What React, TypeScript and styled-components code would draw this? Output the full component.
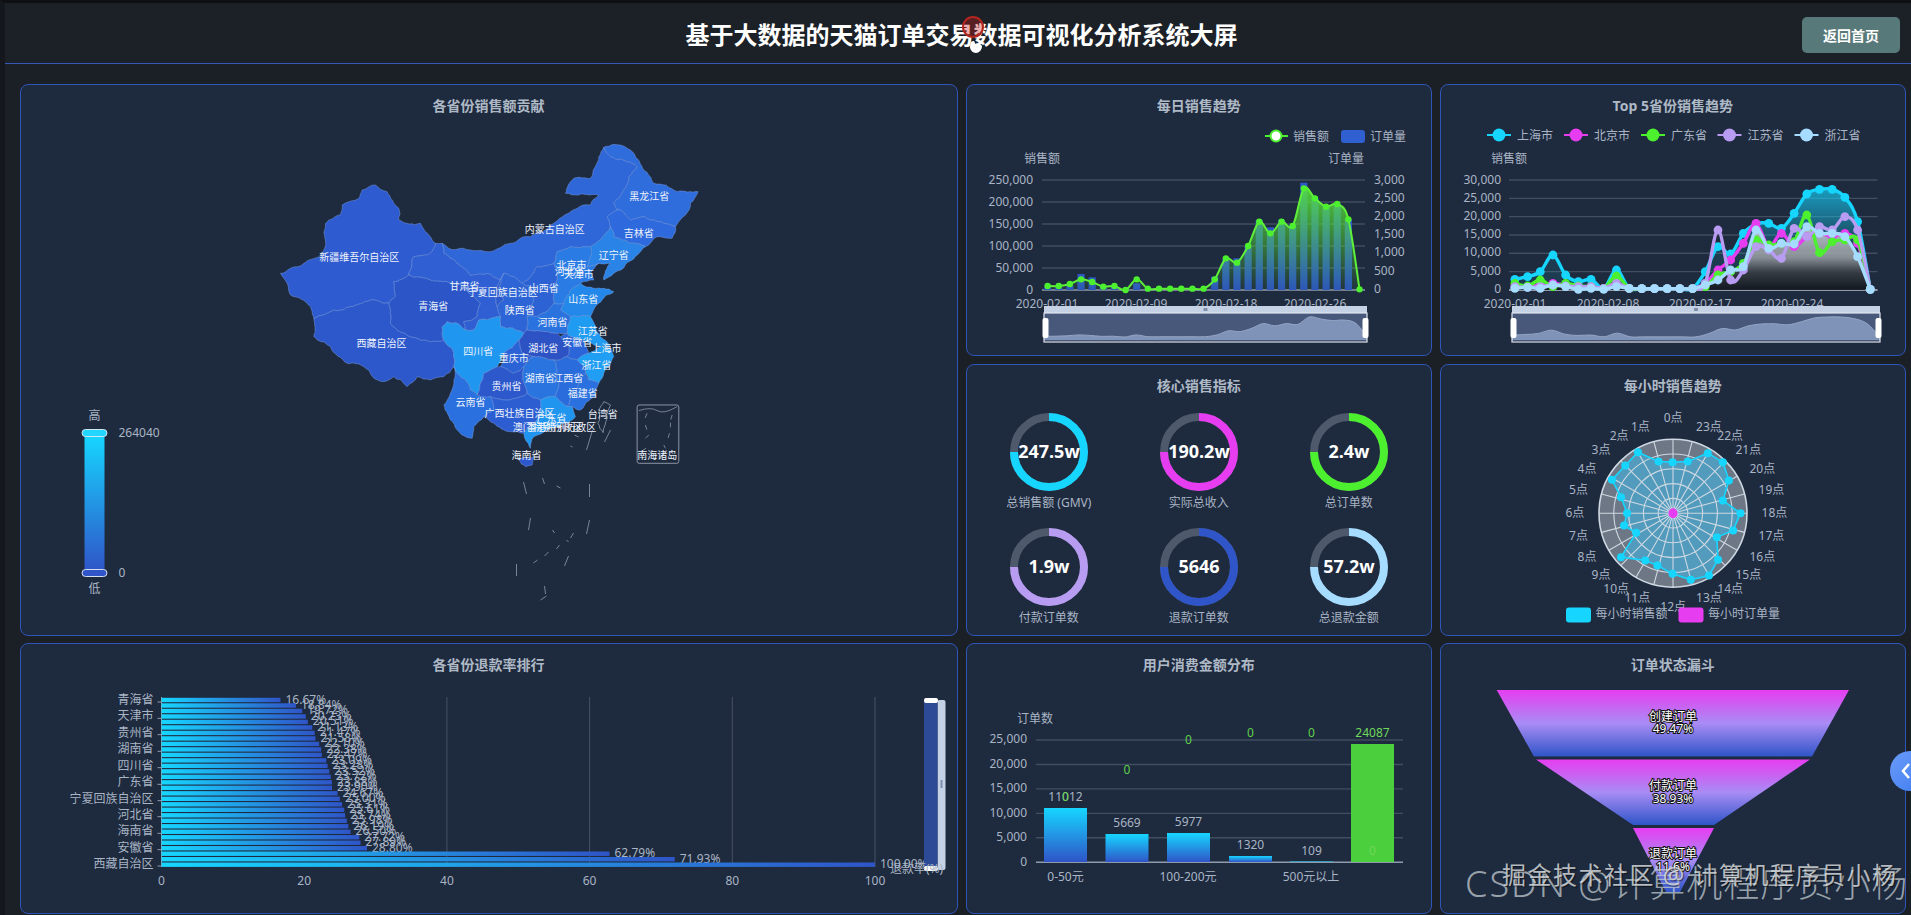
import React from 'react';
import styled, { createGlobalStyle } from 'styled-components';

const GlobalStyle = createGlobalStyle`
  html, body { margin: 0; padding: 0; background: #14181d; }
  body { font-family: "Noto Sans", "Noto Sans CJK SC", sans-serif; overflow: hidden; }
`;

const Page = styled.div`
  position: relative;
  width: 1911px;
  height: 915px;
  overflow: hidden;
  box-sizing: border-box;
  border-left: 5px solid #14171b;
  border-top: 3px solid #0d0f12;
  background: #1b2026;
`;
const Header = styled.header`
  display: grid;
  grid-template-columns: 1fr auto 1fr;
  align-items: center;
  box-sizing: border-box;
  height: 61px;
  padding: 3px 11px 0 18px;
  background: #1c2127;
  border-bottom: 1px solid #3757b8;
`;
const PageTitle = styled.h1`
  grid-column: 2;
  margin: 0;
  color: #fff;
  font-size: 24px;
  line-height: 32px;
  font-weight: 700;
  white-space: nowrap;
`;
const BackButton = styled.button`
  grid-column: 3;
  justify-self: end;
  width: 98px;
  height: 36px;
  border: 0;
  border-radius: 5px;
  background: #587979;
  color: #fff;
  font: 700 14px "Noto Sans", "Noto Sans CJK SC", sans-serif;
`;
const Board = styled.main`
  display: grid;
  grid-template-columns: 938px 465.5px 465.5px;
  grid-template-rows: 272px 272px 271px;
  column-gap: 8.5px;
  row-gap: 7.5px;
  padding: 20px 0 0 14.5px;
`;
const Card = styled.section<{ $tall?: boolean }>`
  display: flex;
  flex-direction: column;
  box-sizing: border-box;
  min-height: 0;
  border: 1px solid #2f55b8;
  border-radius: 8px;
  background: #1e2a3e;
  overflow: hidden;
  grid-row: ${p => (p.$tall ? 'span 2' : 'auto')};
`;
const CardTitle = styled.h2`
  flex: none;
  box-sizing: border-box;
  height: 32px;
  margin: 0;
  padding-top: 11px;
  color: #aeb9c6;
  font-size: 14px;
  line-height: 20px;
  font-weight: 700;
  text-align: center;
`;
const Chart = styled.svg`
  display: block;
  flex: 1;
  width: 100%;
  min-height: 0;
`;
const Label = styled.text<{ $size?: number; $color?: string; $weight?: number; $anchor?: string }>`
  font-family: "Noto Sans", "Noto Sans CJK SC", sans-serif;
  font-size: ${p => p.$size ?? 12}px;
  font-weight: ${p => p.$weight ?? 400};
  fill: ${p => p.$color ?? '#a9b5c5'};
  text-anchor: ${p => p.$anchor ?? 'middle'};
  dominant-baseline: central;
`;
const FunnelLabel = styled(Label)`
  fill: #fff;
  stroke: #111;
  stroke-width: 2px;
  paint-order: stroke;
`;
const MetricGrid = styled.div`
  display: grid;
  grid-template-columns: repeat(3, 150px);
  justify-content: center;
  row-gap: 16px;
  padding-top: 16px;
`;
const Metric = styled.div`
  display: flex;
  flex-direction: column;
  align-items: center;
  gap: 3px;
`;
const MetricRing = styled.svg`
  display: block;
  width: 78px;
  height: 78px;
`;
const MetricName = styled.span`
  color: #a9b5c5;
  font-size: 12px;
  line-height: 18px;
  white-space: nowrap;
`;
const WatermarkBack = styled.div`
  position: absolute;
  left: 1460px;
  top: 859px;
  color: rgba(200, 210, 214, 0.72);
  font-size: 36px;
  line-height: 44px;
  font-weight: 300;
  letter-spacing: 1px;
  white-space: nowrap;
`;
const WatermarkLatin = styled.span`
  letter-spacing: 2px;
`;
const WatermarkFront = styled.div`
  position: absolute;
  left: 1497px;
  top: 855px;
  color: rgba(226, 230, 232, 0.78);
  font-size: 24px;
  line-height: 34px;
  letter-spacing: 1.5px;
  text-shadow: 1px 1px 1px rgba(0, 0, 0, 0.55);
  white-space: nowrap;
`;
const SideToggle = styled.div`
  position: absolute;
  right: -19px;
  top: 748px;
  display: flex;
  align-items: center;
  box-sizing: border-box;
  width: 40px;
  height: 40px;
  padding-left: 11px;
  border-radius: 50%;
  background: linear-gradient(135deg, #6a9cf8, #3f7bf0);
`;
const Seal = styled.svg`
  position: absolute;
  left: 955px;
  top: 10px;
  width: 36px;
  height: 44px;
`;

const CYAN = '#16d6ff', MAG = '#e63df0', GRN = '#4cf02e', VIO = '#b79cf2', NAVY = '#2f55c8', SKY = '#a5dcff';

type Pt = [number, number];
const smooth = (p: Pt[]) => {
  let d = `M${p[0][0]} ${p[0][1]}`;
  for (let i = 0; i < p.length - 1; i++) {
    const a = p[Math.max(i - 1, 0)], b = p[i], c = p[i + 1], e = p[Math.min(i + 2, p.length - 1)];
    d += `C${b[0] + (c[0] - a[0]) / 6} ${b[1] + (c[1] - a[1]) / 6} ${c[0] - (e[0] - b[0]) / 6} ${c[1] - (e[1] - b[1]) / 6} ${c[0]} ${c[1]}`;
  }
  return d;
};
const box = (x: number, y: number, w: number, h: number) => `${x + 1} ${y + 33} ${w - 2} ${h - 34}`;

const px = (X: number) => 960 + X / 1.649;
const y2 = (Y: number) => 70 + Y / 3;
const y3 = (Y: number) => 360 + Y / 3;
const y5 = (Y: number) => 640 + Y / 3;

/* Breaks a coarse border into an organic one; shared edges break the same way. */
const noise = (a: Pt, b: Pt) => {
  const s = Math.sin(a[0] * 12.9898 + a[1] * 78.233 + b[0] * 37.719 + b[1] * 11.135) * 43758.5453;
  return s - Math.floor(s) - 0.5;
};
const split = (a: Pt, b: Pt, depth: number): Pt[] => {
  const swap = a[0] > b[0] || (a[0] === b[0] && a[1] > b[1]);
  const [p, q] = swap ? [b, a] : [a, b];
  const dx = q[0] - p[0], dy = q[1] - p[1];
  if (depth === 0 || Math.hypot(dx, dy) < 12) return [a];
  const n = noise(p, q) * 0.22;
  const m: Pt = [(p[0] + q[0]) / 2 - dy * n, (p[1] + q[1]) / 2 + dx * n];
  return [...split(a, m, depth - 1), ...split(m, b, depth - 1)];
};
const roughen = (s: string) => {
  const pts = s.split(' ').map(t => t.split(',').map(Number) as Pt);
  return pts.flatMap((a, i) => split(a, pts[(i + 1) % pts.length], 3)).map(p => `${p[0].toFixed(1)},${p[1].toFixed(1)}`).join(' ');
};

/* ---------- map ---------- */
const provinces: { c: string; p: string }[] = [
  { c: '#2e5bd0', p: '30,400 60,385 100,370 150,350 165,300 165,250 210,225 215,195 265,175 275,150 315,135 350,155 385,205 385,240 450,250 480,290 495,310 480,340 430,350 415,405 370,425 375,470 355,490 300,480 240,500 190,510 130,535 110,490 60,465 50,430' },
  { c: '#2d58cc', p: '130,535 190,510 240,500 300,480 355,490 360,550 420,590 480,605 520,600 545,625 550,680 520,710 480,720 440,710 410,740 370,710 340,725 280,680 230,670 180,620 140,600 130,590' },
  { c: '#2c56c8', p: '370,425 415,405 480,420 530,425 580,440 610,470 630,490 620,530 580,545 585,570 560,550 530,545 515,560 520,600 480,605 420,590 360,550 355,490 375,470' },
  { c: '#2f5fd3', p: '495,310 515,310 520,340 560,370 600,405 650,400 690,420 670,450 680,500 690,530 650,540 625,540 610,570 585,570 580,545 620,530 630,490 610,470 580,440 530,425 480,420 415,405 430,350 480,340' },
  { c: '#2f66d8', p: '515,310 600,330 660,335 720,310 780,290 850,250 900,215 960,195 985,165 955,165 905,165 885,160 910,115 960,115 985,50 1000,22 1020,50 1085,70 1100,80 1075,110 1060,150 1030,190 1040,210 1010,230 1020,260 990,300 960,320 940,320 900,320 860,335 850,370 800,380 755,430 700,400 690,420 650,400 600,405 560,370 520,340' },
  { c: '#2f6cdc', p: '1000,22 1030,13 1050,15 1090,40 1120,90 1150,130 1220,155 1283,155 1260,190 1245,225 1215,260 1170,245 1120,230 1080,240 1050,210 1040,210 1030,190 1060,150 1075,110 1100,80 1085,70 1020,50' },
  { c: '#2e6ade', p: '1040,210 1050,210 1080,240 1120,230 1170,245 1215,260 1205,295 1160,290 1125,320 1080,310 1030,290 1020,260 1010,230' },
  { c: '#2a83e6', p: '960,320 990,300 1020,260 1030,290 1080,310 1125,320 1075,365 1030,400 1000,420 1020,370 985,370 950,380 960,350' },
  { c: '#2a7be4', p: '860,335 900,320 940,320 960,320 960,350 950,380 985,370 960,400 970,420 930,430 900,450 880,490 850,490 850,440 860,400 850,370' },
  { c: '#2d62d4', p: '800,380 850,370 860,400 850,440 850,490 800,530 770,530 790,480 780,440 755,430' },
  { c: '#2388ea', p: '880,490 900,450 930,430 970,445 1000,445 1030,455 985,490 960,530 900,530 870,510' },
  { c: '#2d64d6', p: '700,400 755,430 780,440 790,480 770,530 770,570 760,580 690,560 690,530 680,500 700,480 680,450' },
  { c: '#2d5acc', p: '690,420 700,400 680,450 700,480 680,500 670,450' },
  { c: '#2a72de', p: '770,530 800,530 850,490 880,490 870,510 900,530 890,580 860,580 820,575 770,570' },
  { c: '#1f9bf2', p: '900,530 960,530 990,590 1020,620 990,620 940,600 900,590 890,580' },
  { c: '#2b65d8', p: '890,580 900,590 940,600 955,640 920,660 890,650 895,610 870,590' },
  { c: '#1f9ef4', p: '955,640 990,620 1020,625 1030,650 1000,700 985,730 955,720 945,680 920,660' },
  { c: '#2d52c4', p: '760,580 770,570 820,575 860,580 870,590 895,610 890,650 850,660 790,650 755,640 745,600' },
  { c: '#1f97f0', p: '520,600 515,560 530,545 560,550 585,570 610,570 625,540 650,540 690,530 690,560 760,580 745,600 700,640 680,680 640,700 620,765 600,750 585,720 550,680 545,625' },
  { c: '#2b62d6', p: '745,600 755,640 790,650 760,680 730,700 690,680 700,640' },
  { c: '#2d58cc', p: '640,700 680,680 690,680 730,700 760,680 765,740 770,760 700,780 660,770 620,765' },
  { c: '#2a70de', p: '550,680 585,720 600,750 620,765 660,770 670,810 640,830 610,860 605,895 560,870 540,840 520,795 540,760' },
  { c: '#2a74e0', p: '790,650 850,660 860,690 855,770 810,780 770,760 765,740 760,680' },
  { c: '#2a6cdc', p: '850,660 890,650 920,660 945,680 945,700 900,770 890,800 855,770 860,690' },
  { c: '#2a70de', p: '945,700 955,720 985,730 975,770 930,810 905,800 890,800 900,770' },
  { c: '#2c5ed2', p: '660,770 700,780 770,760 810,780 810,810 790,850 760,880 720,875 670,850 640,830 670,810' },
  { c: '#1f95f0', p: '810,780 855,770 890,800 905,800 915,830 880,850 830,870 790,890 780,925 765,900 760,880 790,850 810,810' },
  { c: '#2d58cc', p: '745,960 765,950 790,950 785,975 765,980' },
];
const mapNames: [string, number, number][] = [
  ['新疆维吾尔自治区', 266, 350], ['西藏自治区', 333, 610], ['青海省', 488, 497], ['甘肃省', 582, 438],
  ['宁夏回族自治区', 697, 455], ['内蒙古自治区', 853, 268], ['黑龙江省', 1136, 167], ['吉林省', 1105, 280],
  ['辽宁省', 1030, 344], ['北京市', 903, 376], ['河北省', 898, 392], ['天津市', 925, 402], ['山西省', 820, 445],
  ['山东省', 938, 478], ['陕西省', 748, 510], ['河南省', 846, 545], ['江苏省', 967, 572], ['安徽省', 920, 605],
  ['上海市', 1008, 623], ['湖北省', 818, 624], ['四川省', 623, 633], ['重庆市', 730, 653], ['浙江省', 978, 676],
  ['湖南省', 808, 715], ['江西省', 893, 715], ['贵州省', 708, 738], ['福建省', 937, 760], ['云南省', 600, 787],
  ['广西壮族自治区', 747, 820], ['广东省', 843, 835], ['台湾省', 997, 822], ['澳门特别行政区', 832, 862],
  ['香港特别行政区', 872, 862], ['海南省', 768, 945], ['南海诸岛', 1160, 945],
];
const dashes: [number, number, number, number][] = [
  [523, 482, 526, 494], [589, 484, 589, 497], [530, 518, 528, 530], [589, 520, 586, 534], [516, 564, 516, 576],
  [568, 556, 564, 566], [544, 586, 545, 594], [546, 596, 540, 600], [592, 430, 586, 450], [610, 430, 604, 442],
  [542, 478, 544, 484], [556, 486, 560, 488], [573, 533, 570, 538], [559, 545, 556, 549], [548, 552, 544, 556],
  [537, 560, 533, 563], [552, 530, 554, 533], [566, 540, 568, 542], [574, 435, 578, 437], [570, 446, 572, 447],
];

const ChinaMap = () => (
  <Chart viewBox={box(19.5, 84, 938, 551.5)}>
    <defs>
      <linearGradient id="vm" x1="0" y1="0" x2="0" y2="1">
        <stop offset="0" stopColor={CYAN} />
        <stop offset="1" stopColor={NAVY} />
      </linearGradient>
    </defs>
    <g transform="translate(270 140) scale(0.3333)">
      {provinces.map((v, i) => (
        <polygon key={i} points={roughen(v.p)} fill={v.c} stroke="#7fa3e6" strokeOpacity={0.6} strokeWidth={2.2} strokeLinejoin="round" />
      ))}
      <polygon points={roughen('1000,785 1020,795 1010,835 998,878 982,850 985,810')} fill="#1e2a3e" stroke="#8794a6" strokeWidth={2.6} />
      <rect x={1100} y={795} width={125} height={175} rx={6} fill="none" stroke="#8c96a6" strokeWidth={3} />
      <path d="M1105 812Q1140 800 1160 812T1220 800" fill="none" stroke="#8c96a6" strokeWidth={2.4} />
      <path d="M1130 820l-6 14M1205 825l-4 14M1125 855l4 14M1200 848l0 14M1135 885l-10 10M1197 880l-4 14M1127 925l-10 6M1180 915l5 10" stroke="#8c96a6" strokeWidth={2.4} fill="none" />
    </g>
    {dashes.map((d, i) => (
      <line key={i} x1={d[0]} y1={d[1]} x2={d[2]} y2={d[3]} stroke="#77849a" strokeWidth={1} />
    ))}
    {mapNames.map(([n, X, Y]) => (
      <Label key={n} x={270 + X / 3} y={140 + Y / 3} $size={10} $color="#eef3fc">{n}</Label>
    ))}
    <Label x={94} y={415}>高</Label>
    <rect x={84} y={435} width={20} height={136} fill="url(#vm)" />
    <rect x={81.5} y={429.5} width={25} height={7} rx={3.5} fill="#22d6ff" stroke="#cfe6f5" strokeWidth={1} />
    <rect x={81.5} y={569.5} width={25} height={7} rx={3.5} fill="#2f55c8" stroke="#d5ddf0" strokeWidth={1} />
    <Label x={94} y={588}>低</Label>
    <Label x={118} y={432} $anchor="start">264040</Label>
    <Label x={118} y={572} $anchor="start">0</Label>
  </Chart>
);

/* ---------- shared data zoom ---------- */
const DataZoom = ({ x0, x1, ys, lo, hi }: { x0: number; x1: number; ys: number[]; lo: number; hi: number }) => {
  const pts: Pt[] = ys.map((Y, i) => [x0 + ((x1 - x0) * i) / (ys.length - 1), 337 - ((hi - Y) / (hi - lo)) * 20]);
  const d = smooth(pts);
  const mid = (x0 + x1) / 2;
  return (
    <g>
      <rect x={x0} y={306} width={x1 - x0} height={7} fill="#c5d2e5" />
      <rect x={x0} y={313} width={x1 - x0} height={28} fill="#48587a" />
      <path d={`${d}L${x1} 340L${x0} 340Z`} fill="#7f93b8" />
      <path d={d} fill="none" stroke="#93a6c6" strokeWidth={1} />
      <rect x={x0} y={313} width={x1 - x0} height={29} fill="none" stroke="#dfe6f0" strokeWidth={1.2} />
      <rect x={mid - 2} y={308} width={4} height={3} fill="#8090aa" />
      <rect x={x0 - 1.5} y={318} width={6} height={20} rx={2} fill="#fff" />
      <rect x={x1 - 4.5} y={318} width={6} height={20} rx={2} fill="#fff" />
    </g>
  );
};

/* ---------- daily ---------- */
const dailyLine = [648, 648, 642, 628, 636, 650, 648, 660, 628, 656, 656, 656, 656, 656, 656, 628, 565, 578, 528, 455, 490, 455, 468, 355, 385, 410, 402, 448, 658];
const dailyBars = [652, 652, 648, 612, 622, 650, 650, 656, 640, 658, 658, 658, 658, 658, 658, 620, 568, 565, 530, 450, 472, 450, 465, 338, 385, 410, 402, 448, 658];
const dailyX = (i: number) => 1047.6 + i * 11.14;

const DailyChart = () => {
  const line: Pt[] = dailyLine.map((Y, i) => [dailyX(i), y2(Y)]);
  const d = smooth(line);
  return (
    <Chart viewBox={box(966, 84, 465.5, 272)}>
      <defs>
        <linearGradient id="dBar" x1="0" y1="0" x2="0" y2="1">
          <stop offset="0" stopColor="#2f55c8" />
          <stop offset="1" stopColor="#2a4fc0" />
        </linearGradient>
        <linearGradient id="dArea" gradientUnits="userSpaceOnUse" x1="0" y1="190" x2="0" y2="290">
          <stop offset="0" stopColor="#56e63a" stopOpacity={0.85} />
          <stop offset="1" stopColor="#56e63a" stopOpacity={0.05} />
        </linearGradient>
      </defs>
      <line x1={1265} y1={136} x2={1288} y2={136} stroke={GRN} strokeWidth={2} />
      <circle cx={1276} cy={136} r={5.5} fill="#fff" stroke={GRN} strokeWidth={2} />
      <Label x={1293} y={136} $anchor="start">销售额</Label>
      <rect x={1341} y={130} width={24} height={13} rx={3} fill="#2f5fd0" />
      <Label x={1370} y={136} $anchor="start">订单量</Label>
      <Label x={1042} y={158}>销售额</Label>
      <Label x={1346} y={158}>订单量</Label>
      {['250,000', '200,000', '150,000', '100,000', '50,000', '0'].map((t, i) => (
        <g key={t}>
          <line x1={1042} x2={1365} y1={180 + i * 22} y2={180 + i * 22} stroke={i === 5 ? '#8f9bad' : '#414d60'} strokeWidth={1.4} />
          <Label x={1033} y={179 + i * 22} $anchor="end">{t}</Label>
        </g>
      ))}
      {['3,000', '2,500', '2,000', '1,500', '1,000', '500', '0'].map((t, i) => (
        <Label key={t} x={1374} y={179 + i * 18.2} $anchor="start">{t}</Label>
      ))}
      {dailyBars.map((Y, i) => (
        <rect key={i} x={dailyX(i) - 3.6} y={y2(Y)} width={7.2} height={Math.max(290 - y2(Y), 0)} fill="url(#dBar)" />
      ))}
      <path d={`${d}L${dailyX(28)} 290L${dailyX(0)} 290Z`} fill="url(#dArea)" />
      <path d={d} fill="none" stroke="#5ff03a" strokeWidth={2} />
      {line.map((p, i) => <circle key={i} cx={p[0]} cy={p[1]} r={3.2} fill={GRN} />)}
      {[['2020-02-01', 1047], ['2020-02-09', 1136], ['2020-02-18', 1226], ['2020-02-26', 1315]].map(([t, x]) => (
        <Label key={t as string} x={x as number} y={303}>{t}</Label>
      ))}
      <DataZoom x0={1044} x1={1367} ys={dailyLine} lo={355} hi={660} />
    </Chart>
  );
};

/* ---------- top 5 ---------- */
const flat = [656, 656, 656, 656, 656, 656];
const top5: { n: string; c: string; lx: number; v: number[] }[] = [
  { n: '上海市', c: CYAN, lx: 1499, v: [628, 620, 605, 555, 615, 635, 628, 655, 600, 655, ...flat.slice(0, 5), 605, 530, 552, 490, 462, 460, 475, 430, 372, 358, 358, 382, 455, 658] },
  { n: '北京市', c: MAG, lx: 1576, v: [650, 650, 645, 640, 645, 650, 650, 655, 640, 655, ...flat.slice(0, 5), 640, 600, 570, 520, 460, 530, 490, 530, 500, 490, 500, 490, 520, 658] },
  { n: '广东省', c: GRN, lx: 1653, v: [640, 648, 630, 650, 640, 648, 650, 655, 618, 655, ...flat.slice(0, 5), 650, 615, 605, 580, 510, 525, 520, 515, 435, 548, 515, 510, 510, 658] },
  { n: '江苏省', c: VIO, lx: 1729.5, v: [650, 652, 650, 645, 648, 650, 650, 655, 640, 655, ...flat.slice(0, 5), 640, 480, 630, 600, 530, 540, 565, 475, 500, 470, 480, 440, 480, 658] },
  { n: '浙江省', c: SKY, lx: 1806.5, v: [655, 652, 655, 645, 650, 658, 655, 658, 650, 655, ...flat.slice(0, 5), 645, 630, 600, 590, 480, 535, 520, 522, 470, 490, 490, 500, 560, 658] },
];
const topX = (i: number) => px(915 + i * 20.93);

const Top5Chart = () => {
  const paths = top5.map(s => {
    const pts: Pt[] = s.v.map((Y, i) => [topX(i), y2(Y)]);
    return { ...s, pts, d: smooth(pts) };
  });
  const closed = (d: string) => `${d}L${topX(28)} 290L${topX(0)} 290Z`;
  return (
    <Chart viewBox={box(1440, 84, 465.5, 272)}>
      <defs>
        <linearGradient id="tCyan" gradientUnits="userSpaceOnUse" x1="0" y1="185" x2="0" y2="250">
          <stop offset="0" stopColor={CYAN} stopOpacity={0.7} />
          <stop offset="1" stopColor={CYAN} stopOpacity={0.1} />
        </linearGradient>
        <linearGradient id="tWhite" gradientUnits="userSpaceOnUse" x1="0" y1="225" x2="0" y2="290">
          <stop offset="0" stopColor="#dfe3e5" stopOpacity={0.75} />
          <stop offset="0.5" stopColor="#9a9ca0" stopOpacity={0.85} />
          <stop offset="0.72" stopColor="#3a3d44" stopOpacity={0.9} />
          <stop offset="1" stopColor="#10131a" stopOpacity={0.9} />
        </linearGradient>
      </defs>
      {paths.map(s => (
        <g key={s.n}>
          <line x1={s.lx - 12} x2={s.lx + 12} y1={135} y2={135} stroke={s.c} strokeWidth={2} />
          <circle cx={s.lx} cy={135} r={6.5} fill={s.c} />
          <Label x={s.lx + 18} y={135} $anchor="start">{s.n}</Label>
        </g>
      ))}
      <Label x={1509} y={158}>销售额</Label>
      {['30,000', '25,000', '20,000', '15,000', '10,000', '5,000', '0'].map((t, i) => (
        <g key={t}>
          <line x1={1509} x2={1877.5} y1={180 + i * 18.33} y2={180 + i * 18.33} stroke={i === 6 ? '#8f9bad' : '#414d60'} strokeWidth={i === 6 ? 2 : 1.4} />
          <Label x={1501} y={179 + i * 18.2} $anchor="end">{t}</Label>
        </g>
      ))}
      <path d={closed(paths[0].d)} fill="url(#tCyan)" />
      <path d={closed(paths[4].d)} fill="url(#tWhite)" />
      {paths.map(s => (
        <g key={s.n}>
          <path d={s.d} fill="none" stroke={s.c} strokeWidth={3.4} />
          {s.pts.map((p, i) => <circle key={i} cx={p[0]} cy={p[1]} r={4.4} fill={s.c} />)}
        </g>
      ))}
      {[['2020-02-01', 1515], ['2020-02-08', 1608], ['2020-02-17', 1700], ['2020-02-24', 1792]].map(([t, x]) => (
        <Label key={t as string} x={x as number} y={303}>{t}</Label>
      ))}
      <DataZoom x0={1512} x1={1880} ys={top5[0].v} lo={358} hi={658} />
    </Chart>
  );
};

/* ---------- core metrics ---------- */
const metrics = [
  { v: '247.5w', n: '总销售额 (GMV)', c: CYAN },
  { v: '190.2w', n: '实际总收入', c: MAG },
  { v: '2.4w', n: '总订单数', c: GRN },
  { v: '1.9w', n: '付款订单数', c: VIO },
  { v: '5646', n: '退款订单数', c: NAVY },
  { v: '57.2w', n: '总退款金额', c: SKY },
];
const CoreMetrics = () => (
  <MetricGrid>
    {metrics.map(m => (
      <Metric key={m.n}>
        <MetricRing viewBox="0 0 78 78">
          <circle cx={39} cy={39} r={35} fill="none" stroke="#4e5a6c" strokeWidth={8} />
          <circle cx={39} cy={39} r={35} fill="none" stroke={m.c} strokeWidth={8} pathLength={100} strokeDasharray="75 25" transform="rotate(-90 39 39)" />
          <Label x={39} y={38} $size={18} $weight={700} $color="#fff">{m.v}</Label>
        </MetricRing>
        <MetricName>{m.n}</MetricName>
      </Metric>
    ))}
  </MetricGrid>
);

/* ---------- radar ---------- */
const radarArea: Pt[] = [
  [1175, 305], [1152, 303], [1118, 275], [1097, 315], [1075, 358], [1090, 410], [1100, 458], [1095, 495], [1115, 517], [1090, 590], [1130, 600], [1150, 615],
  [1175, 640], [1205, 658], [1235, 645], [1250, 598], [1248, 530], [1275, 510], [1287, 458], [1258, 420], [1268, 360], [1258, 305], [1233, 278], [1200, 303],
];
const radarNames: Pt[] = [
  [1176, 172], [1122, 199], [1087, 225], [1057, 268], [1034, 323], [1020, 388], [1014, 455], [1020, 525], [1034, 587], [1057, 643], [1082, 685], [1117, 712],
  [1176, 738], [1235, 712], [1270, 685], [1300, 643], [1323, 587], [1338, 525], [1343, 455], [1338, 388], [1323, 323], [1300, 268], [1270, 225], [1235, 199],
];
const RadarChart = () => {
  const cx = 1673, cy = 512.7, R = 74;
  const pts = radarArea.map(([X, Y]) => [px(X), y3(Y)] as Pt);
  return (
    <Chart viewBox={box(1440, 363.5, 465.5, 272)}>
      <circle cx={cx} cy={cy} r={R} fill="#6e7785" />
      <polygon points={pts.map(p => p.join(',')).join(' ')} fill="rgba(60,185,235,0.55)" />
      {[1, 2, 3, 4, 5].map(k => (
        <circle key={k} cx={cx} cy={cy} r={(R * k) / 5} fill="none" stroke="#cdd8e2" strokeWidth={k === 5 ? 1.6 : 1.1} />
      ))}
      {radarNames.map((_, i) => {
        const a = (i * Math.PI) / 12;
        return <line key={i} x1={cx} y1={cy} x2={cx + R * Math.sin(a)} y2={cy - R * Math.cos(a)} stroke="#cdd8e2" strokeWidth={1.1} />;
      })}
      <polygon points={pts.map(p => p.join(',')).join(' ')} fill="none" stroke={CYAN} strokeWidth={1.6} />
      {pts.map((p, i) => <circle key={i} cx={p[0]} cy={p[1]} r={4} fill={CYAN} />)}
      <ellipse cx={cx} cy={cy} rx={4.5} ry={5} fill={MAG} />
      {radarNames.map(([X, Y], i) => (
        <Label key={i} x={px(X)} y={y3(Y)}>{i}点</Label>
      ))}
      <rect x={1566} y={607} width={25} height={15} rx={3} fill={CYAN} />
      <Label x={1595.5} y={613} $anchor="start">每小时销售额</Label>
      <rect x={1678.5} y={607} width={25} height={15} rx={3} fill={MAG} />
      <Label x={1708} y={613} $anchor="start">每小时订单量</Label>
    </Chart>
  );
};

/* ---------- refund ranking ---------- */
const refund = [16.67, 18.84, 19.72, 20.23, 20.51, 21.13, 21.47, 21.58, 22.1, 22.38, 22.47, 23.09, 23.28, 23.52, 23.72, 23.88, 23.9, 24.67, 25.0, 25.31, 25.61, 25.74, 25.98, 26.19, 26.5, 27.72, 27.89, 28.8, 62.79, 71.93, 100];
const refundNames: [string, number][] = [['青海省', 178], ['天津市', 227], ['贵州省', 276], ['湖南省', 326], ['四川省', 375], ['广东省', 425], ['宁夏回族自治区', 474], ['河北省', 522], ['海南省', 572], ['安徽省', 621], ['西藏自治区', 670]];
const RefundChart = () => {
  const x0 = 161, unit = 7.135;
  return (
    <Chart viewBox={box(19.5, 643, 938, 271)}>
      <defs>
        <linearGradient id="rBar" x1="0" y1="0" x2="1" y2="0">
          <stop offset="0" stopColor={CYAN} />
          <stop offset="1" stopColor={NAVY} />
        </linearGradient>
      </defs>
      {[40, 60, 80, 100].map(v => (
        <line key={v} x1={x0 + v * unit} x2={x0 + v * unit} y1={697} y2={867} stroke="#465264" strokeWidth={1} />
      ))}
      <line x1={x0} x2={x0} y1={697} y2={867} stroke="#8f9bad" strokeWidth={1} />
      {refund.map((v, i) => {
        const y = 700 + i * 5.49;
        return (
          <g key={i}>
            <rect x={x0} y={y - 2.2} width={v * unit} height={4.4} fill="url(#rBar)" />
            <Label x={x0 + v * unit + 5} y={y - 1} $anchor="start">{v.toFixed(2)}%</Label>
          </g>
        );
      })}
      {refundNames.map(([n, Y]) => (
        <g key={n}>
          <line x1={157} x2={161} y1={y5(Y + 8)} y2={y5(Y + 8)} stroke="#8f9bad" />
          <Label x={153} y={y5(Y)} $anchor="end">{n}</Label>
        </g>
      ))}
      {[0, 20, 40, 60, 80, 100].map(v => (
        <Label key={v} x={x0 + v * unit} y={880}>{v}</Label>
      ))}
      <rect x={937} y={700} width={8} height={170} rx={2} fill="#c5d2e5" />
      <rect x={923.5} y={701} width={13.5} height={169} fill="#2c4a96" />
      <rect x={923.5} y={698} width={14} height={5} rx={2} fill="#fff" />
      <rect x={923.5} y={866} width={14} height={5} rx={2} fill="#fff" />
      <rect x={940} y={780} width={2} height={8} fill="#8090aa" />
      <Label x={916} y={868}>退款率(%)</Label>
    </Chart>
  );
};

/* ---------- spend ---------- */
const spend = [
  { x: 1044, top: 808, lab: '11012', ly: 796, zero: 796 },
  { x: 1105.5, top: 834, lab: '5669', ly: 822.7, zero: 769 },
  { x: 1167, top: 833, lab: '5977', ly: 821.7, zero: 739 },
  { x: 1229, top: 856, lab: '1320', ly: 844, zero: 732 },
  { x: 1290, top: 861.5, lab: '109', ly: 850.7, zero: 732 },
];
const SpendChart = () => (
  <Chart viewBox={box(966, 643, 465.5, 271)}>
    <defs>
      <linearGradient id="sBar" x1="0" y1="0" x2="0" y2="1">
        <stop offset="0" stopColor={CYAN} />
        <stop offset="1" stopColor={NAVY} />
      </linearGradient>
    </defs>
    <Label x={1035} y={718}>订单数</Label>
    {['25,000', '20,000', '15,000', '10,000', '5,000', '0'].map((t, i) => (
      <g key={t}>
        <line x1={1036} x2={1403} y1={740 + i * 24.45} y2={740 + i * 24.45} stroke={i === 5 ? '#8f9bad' : '#414d60'} strokeWidth={1.4} />
        <Label x={1027} y={738.5 + i * 24.6} $anchor="end">{t}</Label>
      </g>
    ))}
    {spend.map(b => (
      <g key={b.lab}>
        <rect x={b.x} y={b.top} width={43} height={862 - b.top} fill="url(#sBar)" />
        <Label x={b.x + 21.5} y={b.ly}>{b.lab}</Label>
        <Label x={b.x + 21.5} y={b.zero} $color="#5fd04a">0</Label>
      </g>
    ))}
    <rect x={1351} y={744} width={43} height={118} fill="#4ccf3c" />
    <Label x={1372.5} y={732} $color="#6fd85a">24087</Label>
    <Label x={1372.5} y={850.7} $color="#6fd85a">0</Label>
    <Label x={1065.5} y={876}>0-50元</Label>
    <Label x={1188} y={876}>100-200元</Label>
    <Label x={1311} y={876}>500元以上</Label>
  </Chart>
);

/* ---------- funnel ---------- */
const FunnelChart = () => (
  <Chart viewBox={box(1440, 643, 465.5, 271)}>
    <defs>
      <linearGradient id="fun" x1="0" y1="0" x2="0" y2="1">
        <stop offset="0" stopColor={MAG} />
        <stop offset="0.5" stopColor="#a98cf5" />
        <stop offset="1" stopColor={NAVY} />
      </linearGradient>
    </defs>
    <polygon points="1496.7,690 1849,690 1812,756.5 1534,756.5" fill="url(#fun)" />
    <polygon points="1536,759.5 1810,759.5 1714,825 1633,825" fill="url(#fun)" />
    <polygon points="1633,828 1714,828 1680,892 1666,892" fill="url(#fun)" />
    <FunnelLabel x={1673} y={716}>创建订单</FunnelLabel>
    <FunnelLabel x={1673} y={728}>49.47%</FunnelLabel>
    <FunnelLabel x={1673} y={785.7}>付款订单</FunnelLabel>
    <FunnelLabel x={1673} y={798}>38.93%</FunnelLabel>
    <FunnelLabel x={1673} y={853.5}>退款订单</FunnelLabel>
    <FunnelLabel x={1673} y={866}>11.6%</FunnelLabel>
  </Chart>
);

export default function App() {
  return (
    <Page>
      <GlobalStyle />
      <Header>
        <PageTitle>基于大数据的天猫订单交易数据可视化分析系统大屏</PageTitle>
        <BackButton>返回首页</BackButton>
      </Header>
      <Board>
        <Card $tall>
          <CardTitle>各省份销售额贡献</CardTitle>
          <ChinaMap />
        </Card>
        <Card>
          <CardTitle>每日销售趋势</CardTitle>
          <DailyChart />
        </Card>
        <Card>
          <CardTitle>Top 5省份销售趋势</CardTitle>
          <Top5Chart />
        </Card>
        <Card>
          <CardTitle>核心销售指标</CardTitle>
          <CoreMetrics />
        </Card>
        <Card>
          <CardTitle>每小时销售趋势</CardTitle>
          <RadarChart />
        </Card>
        <Card>
          <CardTitle>各省份退款率排行</CardTitle>
          <RefundChart />
        </Card>
        <Card>
          <CardTitle>用户消费金额分布</CardTitle>
          <SpendChart />
        </Card>
        <Card>
          <CardTitle>订单状态漏斗</CardTitle>
          <FunnelChart />
        </Card>
      </Board>
      <Seal viewBox="0 0 36 44">
        <circle cx={13} cy={14} r={10} fill="rgba(200,30,30,0.35)" stroke="#b3261e" strokeWidth={2} />
        <path d="M10 34c0-3 1-6 3-6s2 2 2 3c2-1 6 0 7 2 0 4-3 7-6 7s-6-3-6-6z" fill="#fff" />
      </Seal>
      <WatermarkBack><WatermarkLatin>CSDN @</WatermarkLatin>计算机程序员小杨</WatermarkBack>
      <WatermarkFront>掘金技术社区 @ 计算机程序员小杨</WatermarkFront>
      <SideToggle>
        <svg width="9" height="16" viewBox="0 0 9 16">
          <path d="M8 1L2 8l6 7" fill="none" stroke="#fff" strokeWidth="2.5" />
        </svg>
      </SideToggle>
    </Page>
  );
}
